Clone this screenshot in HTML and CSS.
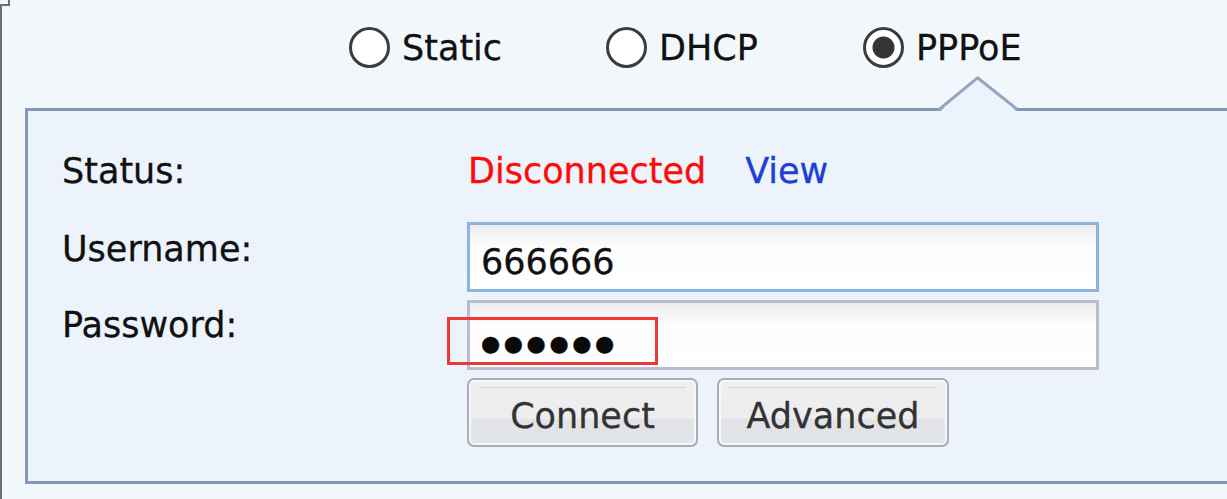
FILE: index.html
```html
<!DOCTYPE html>
<html lang="en">
<head>
<meta charset="utf-8">
<title>PPPoE</title>
<link rel="stylesheet" href="styles.css">
</head>
<body>
<div class="corner"></div>
<div class="frame">
  <div class="modes">
    <label class="mode"><span class="radio"></span><span class="mode-text">Static</span></label>
    <label class="mode"><span class="radio"></span><span class="mode-text">DHCP</span></label>
    <label class="mode"><span class="radio checked"></span><span class="mode-text">PPPoE</span></label>
  </div>
  <div class="panel">
    <svg class="notch" width="84" height="36" viewBox="0 0 84 36" aria-hidden="true">
      <polygon points="3,35.5 40.5,2.5 80,35.5" fill="#ecf3fb"/>
      <polyline points="2,33.5 40.5,1.8 80.5,33.5" fill="none" stroke="#93a8c0" stroke-width="3" stroke-linejoin="round"/>
    </svg>
    <div class="row status-row">
      <div class="label">Status:</div>
      <div class="value"><span class="disconnected">Disconnected</span><span class="view">View</span></div>
    </div>
    <div class="row field-row">
      <div class="label label-user">Username:</div>
      <div class="field field-user">666666</div>
    </div>
    <div class="row field-row">
      <div class="label label-pass">Password:</div>
      <div class="field field-pass"><span class="dots">●●●●●●</span><span class="mark"></span></div>
    </div>
    <div class="row">
      <div class="label"></div>
      <div class="buttons">
        <button class="btn btn-connect">Connect</button>
        <button class="btn btn-advanced">Advanced</button>
      </div>
    </div>
  </div>
</div>
</body>
</html>
```
FILE: styles.css
```css
html, body {
  margin: 0;
  padding: 0;
}
body {
  background: #f2f7fc;
  font-family: "DejaVu Sans", Verdana, sans-serif;
  font-size: 35px;
  line-height: 44px;
  color: #111;
  overflow: hidden;
  width: 1227px;
  height: 499px;
  -webkit-text-stroke: 0.3px currentColor;
}
.corner {
  width: 8px;
  height: 4px;
  border-right: 2px solid #6e6e6e;
  border-bottom: 2px solid #6e6e6e;
}
.frame {
  border-left: 2px solid #6e6e6e;
  height: 493px;
}
.modes {
  display: flex;
  padding-left: 347px;
  padding-top: 19px;
  height: 44px;
}
.mode {
  display: flex;
  align-items: center;
  gap: 12px;
  width: 257px;
  flex: none;
}
.mode:last-child {
  width: auto;
}
.mode-text {
  padding-top: 2px;
}
.radio {
  width: 35px;
  height: 35px;
  border: 3px solid #3c3c3c;
  border-radius: 50%;
  background: #fff;
  flex: none;
}
.radio.checked {
  background: radial-gradient(circle, #363636 0 10.5px, #fff 11.5px);
}
.panel {
  position: relative;
  margin-top: 39px;
  margin-left: 23px;
  width: 1300px;
  box-sizing: border-box;
  border: 3px solid #8199b6;
  background: #ecf3fb;
  padding: 38px 0 34px 34px;
}
.notch {
  position: absolute;
  left: 909px;
  top: -35px;
}
.row {
  display: flex;
}
.label {
  width: 405px;
  flex: none;
}
.status-row {
  height: 44px;
  margin-bottom: 29px;
}
.value {
  padding-left: 1px;
}
.disconnected {
  color: #ff0a0a;
}
.view {
  color: #1d3fd6;
  margin-left: 39px;
}
.field-row {
  margin-bottom: 8px;
}
.label-user {
  padding-top: 5px;
}
.label-pass {
  padding-top: 3px;
}
.field {
  position: relative;
  width: 632px;
  height: 70px;
  box-sizing: border-box;
  border: 3px solid #8cb4de;
  padding: 15px 0 0 11px;
  background: linear-gradient(to bottom, #ececec 0, #fdfdfd 22px, #fff 100%);
  color: #111;
}
.field-pass {
  border-color: #b8bccc;
  padding-top: 14px;
}
.dots {
  font-size: 22px;
  letter-spacing: 3.6px;
  color: #0a0a0a;
}
.mark {
  position: absolute;
  left: -23px;
  top: 14px;
  width: 211px;
  height: 48px;
  box-sizing: border-box;
  border: 3px solid #ee3838;
}
.buttons {
  display: flex;
  gap: 19px;
}
.btn {
  width: 231px;
  height: 69px;
  box-sizing: border-box;
  border: 2px solid #a9acb9;
  border-radius: 7px;
  box-shadow: inset 0 0 0 2px #f7f7f9;
  background:
    linear-gradient(#d2d3d8, #d2d3d8) no-repeat 10px 7px / calc(100% - 20px) 1px,
    linear-gradient(to bottom, #efeff2 0, #ededf0 60%, #e2e3e6 60%, #e3e4e7 100%);
  font-family: "DejaVu Sans", Verdana, sans-serif;
  font-size: 35px;
  color: #333;
  padding: 6px 0 0;
  line-height: 44px;
  -webkit-text-stroke: 0.3px #333;
}
.btn-advanced {
  width: 232px;
}
```
